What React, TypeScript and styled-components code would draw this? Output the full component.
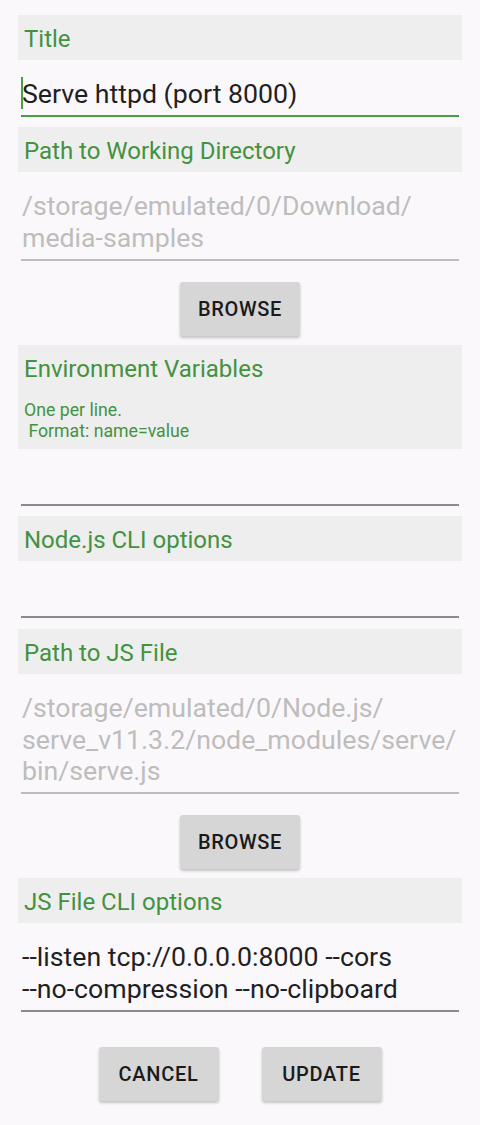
import React from "react";
import styled, { createGlobalStyle } from "styled-components";

const Global = createGlobalStyle`
  html, body {
    margin: 0;
    padding: 0;
    background: #fbf8fb;
  }
  body {
    font-family: Roboto, "Noto Sans", "Liberation Sans", sans-serif;
  }
`;

const Page = styled.div`
  width: 480px;
  min-height: 1125px;
  box-sizing: border-box;
  padding: 15px 18px 0 18px;
  display: flex;
  flex-direction: column;
  background: #fbf8fb;
`;

const Header = styled.div`
  background: #eeeeee;
  padding: 10px 6px 7px 6px;
  display: flex;
  flex-direction: column;
`;

const HeaderTitle = styled.div`
  color: #43923f;
  font-size: 24px;
  line-height: 28px;
`;

const HeaderHint = styled.div`
  color: #43923f;
  font-size: 17.7px;
  line-height: 21px;
  margin-top: 17px;
  white-space: pre-wrap;
`;

const Field = styled.div<{
  $state: "focused" | "normal" | "disabled";
  $lines: number;
  $after: number;
}>`
  margin: 0 3px ${(p) => p.$after}px 3px;
  padding: 19px 0 5px 1px;
  min-height: ${(p) => p.$lines * 31.3}px;
  font-size: 26.7px;
  line-height: 31.3px;
  color: ${(p) => (p.$state === "disabled" ? "#bdbdbd" : "#1f1f1f")};
  border-bottom: 2px solid
    ${(p) =>
      p.$state === "focused" ? "#4a9f46" : p.$state === "disabled" ? "#bdbdbd" : "#8a8a8a"};
  position: relative;
  word-break: break-word;
`;

const Cursor = styled.span`
  position: absolute;
  left: 0;
  top: 17px;
  width: 2px;
  height: 32px;
  background: #4a9f46;
`;

const ButtonRow = styled.div<{ $top: number; $bottom: number }>`
  display: flex;
  justify-content: center;
  gap: 43px;
  margin-top: ${(p) => p.$top}px;
  margin-bottom: ${(p) => p.$bottom}px;
`;

const Button = styled.button`
  width: 120px;
  height: 54px;
  border: none;
  border-radius: 3px;
  background: #d6d6d7;
  box-shadow: 0 2px 3px rgba(0, 0, 0, 0.22);
  color: #1a1a1a;
  font-family: Roboto, "Noto Sans", "Liberation Sans", sans-serif;
  font-weight: 500;
  font-size: 20px;
  letter-spacing: 0.7px;
  text-transform: uppercase;
  padding: 0;
`;

export default function App() {
  return (
    <>
      <Global />
      <Page>
        <Header>
          <HeaderTitle>Title</HeaderTitle>
        </Header>
        <Field $state="focused" $lines={1} $after={10}>
          <Cursor />
          Serve httpd (port 8000)
        </Field>

        <Header>
          <HeaderTitle>Path to Working Directory</HeaderTitle>
        </Header>
        <Field $state="disabled" $lines={2} $after={0}>
          /storage/emulated/0/Download/
          <br />
          media-samples
        </Field>
        <ButtonRow $top={21} $bottom={9}>
          <Button>Browse</Button>
        </ButtonRow>

        <Header>
          <HeaderTitle>Environment Variables</HeaderTitle>
          <HeaderHint>{"One per line.\n Format: name=value"}</HeaderHint>
        </Header>
        <Field $state="normal" $lines={1} $after={10} />

        <Header>
          <HeaderTitle>Node.js CLI options</HeaderTitle>
        </Header>
        <Field $state="normal" $lines={1} $after={11} />

        <Header>
          <HeaderTitle>Path to JS File</HeaderTitle>
        </Header>
        <Field $state="disabled" $lines={3} $after={0}>
          /storage/emulated/0/Node.js/
          <br />
          serve_v11.3.2/node_modules/serve/
          <br />
          bin/serve.js
        </Field>
        <ButtonRow $top={21} $bottom={9}>
          <Button>Browse</Button>
        </ButtonRow>

        <Header>
          <HeaderTitle>JS File CLI options</HeaderTitle>
        </Header>
        <Field $state="normal" $lines={2} $after={0}>
          --listen tcp://0.0.0.0:8000 --cors
          <br />
          --no-compression --no-clipboard
        </Field>
        <ButtonRow $top={35} $bottom={0}>
          <Button>Cancel</Button>
          <Button>Update</Button>
        </ButtonRow>
      </Page>
    </>
  );
}
